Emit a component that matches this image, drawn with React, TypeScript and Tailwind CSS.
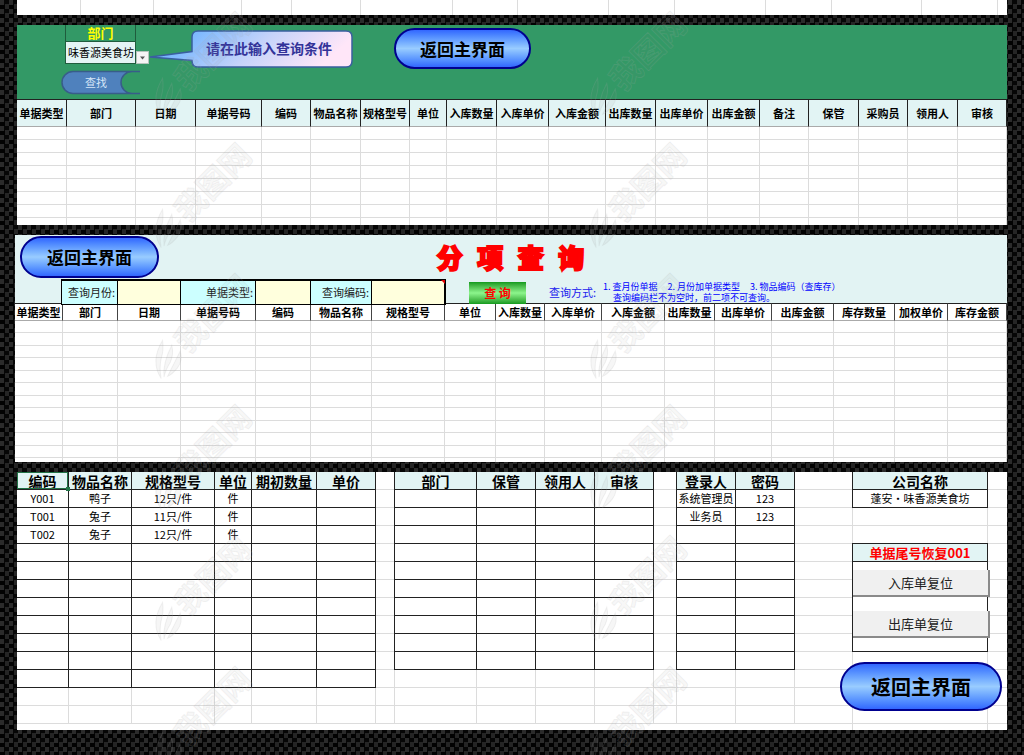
import {ReactNode} from "react";
import clsx from "clsx";

type Column = {
    name: string,
    width: number,
}

type SheetProps = {
    columns: Column[],
    rows: string[][],
    filled: number,
    leftBorder?: boolean,
}

const TOTAL_ROWS = 13

/* 入库/出库 明细 */
const recordColumns: Column[] = [
    {name: '单据类型', width: 50},
    {name: '部门', width: 69},
    {name: '日期', width: 60},
    {name: '单据号码', width: 66},
    {name: '编码', width: 49},
    {name: '物品名称', width: 50},
    {name: '规格型号', width: 49},
    {name: '单位', width: 37},
    {name: '入库数量', width: 50},
    {name: '入库单价', width: 52},
    {name: '入库金额', width: 57},
    {name: '出库数量', width: 50},
    {name: '出库单价', width: 52},
    {name: '出库金额', width: 52},
    {name: '备注', width: 49},
    {name: '保管', width: 50},
    {name: '采购员', width: 49},
    {name: '领用人', width: 50},
    {name: '审核', width: 49},
]

/* 分项查询 */
const queryColumns: Column[] = [
    {name: '单据类型', width: 48},
    {name: '部门', width: 55},
    {name: '日期', width: 63},
    {name: '单据号码', width: 75},
    {name: '编码', width: 55},
    {name: '物品名称', width: 61},
    {name: '规格型号', width: 73},
    {name: '单位', width: 51},
    {name: '入库数量', width: 49},
    {name: '入库单价', width: 57},
    {name: '入库金额', width: 63},
    {name: '出库数量', width: 50},
    {name: '出库单价', width: 57},
    {name: '出库金额', width: 62},
    {name: '库存数量', width: 61},
    {name: '加权单价', width: 53},
    {name: '库存金额', width: 59},
]

const itemColumns: Column[] = [
    {name: '编码', width: 52},
    {name: '物品名称', width: 63},
    {name: '规格型号', width: 83},
    {name: '单位', width: 37},
    {name: '期初数量', width: 65},
    {name: '单价', width: 59},
]

const items = [
    ['Y001', '鸭子', '12只/件', '件'],
    ['T001', '兔子', '11只/件', '件'],
    ['T002', '兔子', '12只/件', '件'],
]

const staffColumns: Column[] = [
    {name: '部门', width: 83},
    {name: '保管', width: 59},
    {name: '领用人', width: 59},
    {name: '审核', width: 59},
]

const userColumns: Column[] = [
    {name: '登录人', width: 60},
    {name: '密码', width: 59},
]

const users = [
    ['系统管理员', '123'],
    ['业务员', '123'],
]

const range = (n: number) => Array.from({length: n}, (_, i) => i)

function ColGroup({columns}: {columns: Column[]}) {
    const total = columns.reduce((sum, c) => sum + c.width, 0)

    return (
        <colgroup>
            {columns.map(c => <col key={c.name} style={{width: `${c.width / total * 100}%`}}/>)}
        </colgroup>
    )
}

function HomeButton({className}: {className: string}) {
    return (
        <button
            className={clsx(
                "shrink-0 rounded-full border-2 border-[#00008f] bg-linear-to-b from-[#3366ff] via-[#99ccff] to-[#3366ff] font-bold whitespace-nowrap text-black",
                className
            )}
        >返回主界面</button>
    )
}

/* 上一张表露出来的底边 */
function TopStrip() {
    return (
        <div className="mx-[17px] grid h-[15px] grid-cols-[64fr_73fr_88fr_50fr_69fr_92fr_65fr_91fr_66fr_91fr_66fr_90fr_76fr_9fr] bg-white">
            {range(14).map(i => <div key={i} className="border-r border-[#dcdcdc] last:border-r-0"/>)}
        </div>
    )
}

function Callout() {
    return (
        <div className="relative h-[38px] w-[204px] shrink-0">
            <svg className="absolute inset-0" width="204" height="38" viewBox="0 0 204 38">
                <defs>
                    <linearGradient id="callout" x1="0" y1="0" x2="1" y2="0.2">
                        <stop offset="0.15" stopColor="#6db3ff"/>
                        <stop offset="0.6" stopColor="#c6d3fa"/>
                        <stop offset="1" stopColor="#ffe6f8"/>
                    </linearGradient>
                </defs>
                <path
                    d="M49 1H197Q203 1 203 7V31Q203 37 197 37H49Q43 37 43 31V30.500L1 27L43 21.500V7Q43 1 49 1Z"
                    fill="url(#callout)" stroke="#3a5f9f" strokeWidth="1.500"
                />
            </svg>
            <p className="relative pl-[57px] text-[14px] leading-[36px] font-bold whitespace-nowrap text-[#333399]">请在此输入查询条件</p>
        </div>
    )
}

function RecordPanel() {
    return (
        <section className="mx-[17px] bg-white">
            <div className="flex h-[74px] items-start bg-[#339966] pl-[48px]">
                <div className="w-[84px] shrink-0">
                    <label
                        htmlFor="dept"
                        className="block h-[16px] w-[71px] border-x border-[#1f5c3d] text-center text-[13px] leading-[16px] font-bold text-[#ffff00]"
                    >部门</label>
                    <div className="flex h-[23px] items-end">
                        <select
                            id="dept"
                            className="h-[23px] w-[71px] appearance-none border border-[#1f5c3d] bg-[#e4f4f4] pl-[2px] text-[11px] text-black"
                        >
                            <option>味香源美食坊</option>
                        </select>
                        <svg width="13" height="13" viewBox="0 0 13 13">
                            <rect x="0.500" y="0.500" width="12" height="12" fill="#f4f4f4" stroke="#b5c4bc"/>
                            <path d="M4 5.500H9L6.500 8.500Z" fill="#555"/>
                        </svg>
                    </div>
                    <button className="relative mt-[6px] -ml-1 block h-[25px] w-[79px] text-[#d5e6f8]">
                        <svg className="absolute inset-0" width="79" height="25" viewBox="0 0 79 25">
                            <path d="M71 1.500H12A11 11 0 0 0 12 23.500H71A11 11 0 0 1 71 1.500Z" fill="#4f81bd"/>
                            <path
                                d="M79 1.500H12A11 11 0 0 0 12 23.500H79M71 1.500A11 11 0 0 0 71 23.500"
                                fill="none" stroke="#385d8a" strokeWidth="1.500"
                            />
                        </svg>
                        <span className="relative block pr-[9px] text-center text-[11px] leading-[25px]">查找</span>
                    </button>
                </div>
                <div className="pt-[5px]"><Callout/></div>
                <div className="pt-[3px] pl-[41px]"><HomeButton className="h-[41px] w-[137px] text-[17px]"/></div>
            </div>

            <table className="w-full table-fixed border-separate border-spacing-0">
                <ColGroup columns={recordColumns}/>
                <thead>
                <tr className="h-[28px]">
                    {recordColumns.map(c => (
                        <th
                            key={c.name}
                            className="border-t border-r border-b border-t-[#222] border-r-[#222] border-b-[#aaa] bg-[#e2f4f4] p-0 text-[11px] leading-none font-bold whitespace-nowrap"
                        >{c.name}</th>
                    ))}
                </tr>
                </thead>
                <tbody>
                {range(7).map(r => (
                    <tr key={r} className="h-[13px]">
                        {recordColumns.map(c => <td key={c.name} className="border-r border-b border-[#dcdcdc] p-0"/>)}
                    </tr>
                ))}
                <tr className="h-[7px]">
                    {recordColumns.map(c => <td key={c.name} className="border-r border-[#dcdcdc] p-0"/>)}
                </tr>
                </tbody>
            </table>
        </section>
    )
}

function QueryField({id, label, marked}: {id: string, label: string, marked?: boolean}) {
    return (
        <>
            <label
                htmlFor={id}
                className="border-t-2 border-r border-b border-black bg-[#ccffff] pr-[2px] text-right text-[11px] leading-[23px] whitespace-nowrap text-[#222]"
            >{label}</label>
            <div className="relative min-w-0">
                <input
                    id={id}
                    className={clsx(
                        "block h-full w-full border-t-2 border-b border-black bg-[#ffffdd] px-1 text-[11px] outline-none",
                        marked ? "border-r-2" : "border-r"
                    )}
                />
                {/* 批注标记 */}
                {marked && <span className="absolute top-[1px] right-[1px] size-[4px] bg-[#e00000] [clip-path:polygon(0_0,100%_0,100%_100%)]"/>}
            </div>
        </>
    )
}

function QueryPanel() {
    return (
        <section className="mr-[17px] ml-[15px] bg-white">
            <div className="bg-[#e2f3f3]">
                <div className="grid h-[44px] grid-cols-[1fr_auto_1fr] items-center pl-[5px]">
                    <HomeButton className="h-[42px] w-[139px] text-[17px]"/>
                    <h1 className="pt-[4px] pr-[6px] font-['Liberation_Sans','Noto_Sans_CJK_SC',sans-serif] text-[26px] leading-none font-black whitespace-pre text-[#ff0000] [-webkit-text-stroke:2px_#ff0000]">分  项  查  询</h1>
                </div>
                <div className="grid h-[24px] grid-cols-[47fr_56fr_63fr_75fr_55fr_61fr_74fr_561fr]">
                    <div className="border-r border-black"/>
                    <QueryField id="month" label="查询月份:"/>
                    <QueryField id="kind" label="单据类型:"/>
                    <QueryField id="code" label="查询编码:" marked/>
                    <div className="flex items-center pl-[23px] text-[#2020ee]">
                        <button className="mt-[2px] h-[22px] w-[57px] shrink-0 bg-linear-to-b from-[#0f9a1c] via-[#8cf58c] to-[#0f9a1c] text-[12px] font-bold text-[#ff0000]">查 询</button>
                        <span className="pl-[23px] text-[11px] whitespace-nowrap">查询方式:</span>
                        <div className="pl-[7px] text-[9px] leading-[11px] whitespace-nowrap text-[#0000ff]">
                            <p className="flex gap-[10px]">
                                <span>1. 查月份单据</span>
                                <span>2. 月份加单据类型</span>
                                <span>3. 物品编码（查库存）</span>
                            </p>
                            <p className="pl-[10px]">查询编码栏不为空时，前二项不可查询。</p>
                        </div>
                    </div>
                </div>
            </div>

            <table className="w-full table-fixed border-separate border-spacing-0">
                <ColGroup columns={queryColumns}/>
                <thead>
                <tr className="h-[18px]">
                    {queryColumns.map(c => (
                        <th
                            key={c.name}
                            className="border-t border-r border-b border-t-[#222] border-r-[#444] border-b-[#aaa] p-0 text-[11px] leading-none font-bold whitespace-nowrap"
                        >{c.name}</th>
                    ))}
                </tr>
                </thead>
                <tbody>
                {range(11).map(r => (
                    <tr key={r} className={r % 2 === 0 ? "h-[12px]" : "h-[13px]"}>
                        {queryColumns.map(c => <td key={c.name} className="border-r border-b border-[#dcdcdc] p-0"/>)}
                    </tr>
                ))}
                <tr className="h-[4px]">
                    {queryColumns.map(c => <td key={c.name} className="border-r border-[#dcdcdc] p-0"/>)}
                </tr>
                </tbody>
            </table>
        </section>
    )
}

function Sheet({columns, rows, filled, leftBorder}: SheetProps) {
    return (
        <table className="w-full table-fixed border-separate border-spacing-0 self-start">
            <ColGroup columns={columns}/>
            <thead>
            <tr className="h-[18px]">
                {columns.map((c, i) => (
                    <th
                        key={c.name}
                        className={clsx(
                            "border-r border-b border-[#222] bg-[#e2f4f4] p-0 text-[14px] leading-none font-bold whitespace-nowrap",
                            leftBorder && i === 0 && "border-l",
                            !leftBorder && i === 0 && "relative z-10"
                        )}
                    >
                        {c.name}
                        {/* 当前选中的单元格 */}
                        {!leftBorder && i === 0 &&
                            <span className="absolute inset-0 border border-[#217346] after:absolute after:-right-[3px] after:-bottom-[3px] after:size-[4px] after:bg-[#217346]"/>}
                    </th>
                ))}
            </tr>
            </thead>
            <tbody>
            {range(TOTAL_ROWS).map(r => (
                <tr key={r} className="h-[18px]">
                    {columns.map((c, i) => (
                        <td
                            key={c.name}
                            className={clsx(
                                "border-r border-b p-0 text-center text-[11px] leading-none whitespace-nowrap",
                                r < filled ? "border-[#222]" : "border-[#dcdcdc]",
                                leftBorder && i === 0 && "border-l"
                            )}
                        >{rows[r]?.[i]}</td>
                    ))}
                </tr>
            ))}
            </tbody>
        </table>
    )
}

function ResetButton({children, className}: {children: ReactNode, className?: string}) {
    return (
        <button
            className={clsx(
                "block h-[27px] w-[calc(100%+3px)] border-r-2 border-b-2 border-[#8a8a8a] bg-[#f0f0f0] text-[13px] leading-none text-[#222]",
                className
            )}
        >{children}</button>
    )
}

function SettingPanel() {
    return (
        <section className="mx-[17px] grid h-[258px] grid-cols-[359fr_18fr_260fr_22fr_119fr_57fr_136fr_19fr] overflow-hidden bg-white bg-[linear-gradient(to_bottom,transparent_17px,#dcdcdc_17px)] bg-[length:100%_18px]">
            <Sheet columns={itemColumns} rows={items} filled={11}/>
            <div/>
            <Sheet columns={staffColumns} rows={[]} filled={10} leftBorder/>
            <div/>
            <Sheet columns={userColumns} rows={users} filled={10} leftBorder/>
            <div/>
            <div className="min-w-0 border-x border-[#dcdcdc]">
                <div className="-mx-px border-x border-[#222]">
                    <h2 className="h-[18px] border-b border-[#222] bg-[#e2f4f4] text-center text-[14px] leading-[18px] font-bold">公司名称</h2>
                    <p className="h-[18px] border-b border-[#222] text-center text-[11px] leading-[17px] whitespace-nowrap">蓬安·味香源美食坊</p>
                </div>
                <div className="-mx-px mt-[35px] border border-[#222] bg-white">
                    <h2 className="h-[18px] border-b border-[#222] bg-[#e2f4f4] text-center text-[13px] leading-[17px] font-bold whitespace-nowrap text-[#ff0000]">单据尾号恢复001</h2>
                    <div className="h-[89px] pt-[8px]">
                        <ResetButton>入库单复位</ResetButton>
                        <ResetButton className="mt-[14px]">出库单复位</ResetButton>
                    </div>
                </div>
                <HomeButton className="mt-[10px] -ml-[13px] h-[49px] w-[162px] text-[20px]"/>
            </div>
            <div/>
        </section>
    )
}

function Watermark() {
    return (
        <div aria-hidden="true" className="pointer-events-none absolute inset-0 grid grid-cols-[435px_435px] content-start overflow-hidden select-none">
            {range(12).map(i => (
                <div key={i} className="h-[131px] pt-[8px] pl-[154px]">
                    <svg className="overflow-visible" width="120" height="110" viewBox="0 0 120 110">
                        <g fill="#808080" fillOpacity="0.07" stroke="#b0b0b0" strokeOpacity="0.16" transform="rotate(-45 10 100)">
                            {/* 羽毛形标志 */}
                            <path d="M2 104Q6 84 30 78Q24 86 16 90Q8 95 2 104Z"/>
                            <path d="M5 105Q14 94 33 88Q28 96 20 99Q11 101 5 105Z"/>
                            <path d="M8 107Q20 103 35 98Q30 107 21 108Q13 109 8 107Z"/>
                            <text x="38" y="106" fontSize="31" fontWeight="700">我图网</text>
                        </g>
                    </svg>
                </div>
            ))}
        </div>
    )
}

function App() {
    return (
        <main className="relative flex min-h-screen flex-col gap-[10px] overflow-hidden bg-[#040404] bg-[conic-gradient(#060606_25%,#252525_0_50%,#020202_0_75%,#2b2b2b_0)] bg-[length:9px_9px] pb-[25px] font-['Noto_Sans_CJK_SC',sans-serif] text-black">
            <TopStrip/>
            <RecordPanel/>
            <QueryPanel/>
            <SettingPanel/>
            <Watermark/>
        </main>
    )
}

export default App;
